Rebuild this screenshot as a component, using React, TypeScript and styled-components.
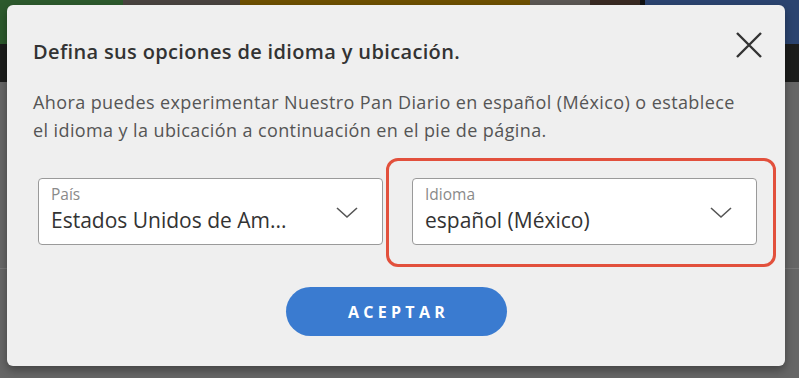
import React from "react";
import styled, { createGlobalStyle } from "styled-components";

const Global = createGlobalStyle`
  html, body { margin: 0; padding: 0; }
  body {
    width: 799px;
    height: 378px;
    overflow: hidden;
    background: #656565;
    font-family: "Open Sans", "Noto Sans", sans-serif;
  }
`;

const Page = styled.div`
  position: relative;
  width: 799px;
  height: 378px;
  overflow: hidden;
  background: #666666;
`;

const Hero = styled.div`
  display: flex;
  height: 44px;
`;

const Tile = styled.div<{ $w: number; $bg: string }>`
  width: ${(p) => p.$w}px;
  flex: ${(p) => (p.$w === 0 ? "1" : "none")};
  background: ${(p) => p.$bg};
`;

const DarkBand = styled.div`
  height: 38px;
  background: #1c1d1c;
`;

const Rule = styled.div`
  margin-top: 186px;
  height: 1px;
  background: #777;
`;

const Modal = styled.div`
  position: absolute;
  left: 7px;
  top: 5px;
  width: 778px;
  height: 361px;
  box-sizing: border-box;
  background: #efefef;
  border-radius: 6px;
  box-shadow: 0 4px 10px rgba(0, 0, 0, 0.35);
  padding: 35px 28px 30px 26px;
  display: flex;
  flex-direction: column;
`;

const Title = styled.h2`
  margin: 0;
  font-size: 20px;
  line-height: 24px;
  font-weight: 600;
  letter-spacing: 0.35px;
  color: #333;
`;

const CloseButton = styled.button`
  position: absolute;
  right: 21px;
  top: 25px;
  width: 30px;
  height: 30px;
  padding: 0;
  border: none;
  background: none;
  display: flex;
  align-items: center;
  justify-content: center;
`;

const Body = styled.p`
  margin: 24px 0 0;
  font-size: 18px;
  line-height: 28px;
  letter-spacing: 0.4px;
  color: #555;
  white-space: nowrap;
`;

const SelectRow = styled.div`
  margin: 34px 0 0 5px;
  display: grid;
  grid-template-columns: 345px 345px;
  column-gap: 29px;
`;

const SelectBox = styled.div`
  position: relative;
  height: 67px;
  box-sizing: border-box;
  background: #fff;
  border: 1px solid #9a9a9a;
  border-radius: 4px;
  padding: 5px 60px 0 12px;
  display: flex;
  flex-direction: column;
`;

const Highlight = styled.div`
  position: absolute;
  left: -27px;
  top: -21px;
  right: -20px;
  bottom: -23px;
  border: 3px solid #e2503c;
  border-radius: 12px;
  pointer-events: none;
`;

const Label = styled.span`
  font-size: 15.5px;
  line-height: 20px;
  color: #8a8a8a;
`;

const Value = styled.span`
  font-size: 21px;
  line-height: 32px;
  color: #333;
  white-space: nowrap;
  overflow: hidden;
  text-overflow: ellipsis;
`;

const Chevron = styled.svg`
  position: absolute;
  right: 24px;
  top: 28px;
`;

const Footer = styled.div`
  margin-top: 42px;
  display: flex;
  justify-content: center;
`;

const Accept = styled.button`
  width: 221px;
  height: 49px;
  margin-left: 3px;
  padding: 0 0 0 4px;
  border: none;
  border-radius: 25px;
  background: #3a7bd0;
  color: #fff;
  font-family: "Open Sans", "Noto Sans", sans-serif;
  font-size: 16px;
  font-weight: 700;
  letter-spacing: 4.3px;
`;

const ChevronIcon = () => (
  <Chevron width="22" height="12" viewBox="0 0 22 12">
    <path d="M1 1 L11 10 L21 1" fill="none" stroke="#555" strokeWidth="1.6" />
  </Chevron>
);

export default function App() {
  return (
    <>
      <Global />
      <Page>
        <Hero>
          <Tile $w={123} $bg="#2d5a2d" />
          <Tile $w={117} $bg="#4a4440" />
          <Tile $w={290} $bg="#6e5000" />
          <Tile $w={60} $bg="#5b5855" />
          <Tile $w={50} $bg="#3a2a22" />
          <Tile $w={5} $bg="#111" />
          <Tile $w={0} $bg="#2b4470" />
        </Hero>
        <DarkBand />
        <Rule />
        <Modal>
          <CloseButton aria-label="Cerrar">
            <svg width="28" height="28" viewBox="0 0 28 28">
              <path d="M2 2 L26 26 M26 2 L2 26" stroke="#333" strokeWidth="2.4" />
            </svg>
          </CloseButton>
          <Title>Defina sus opciones de idioma y ubicación.</Title>
          <Body>
            Ahora puedes experimentar Nuestro Pan Diario en español (México) o establece
            <br />
            el idioma y la ubicación a continuación en el pie de página.
          </Body>
          <SelectRow>
            <SelectBox>
              <Label>País</Label>
              <Value>Estados Unidos de Am...</Value>
              <ChevronIcon />
            </SelectBox>
            <SelectBox>
              <Highlight />
              <Label>Idioma</Label>
              <Value>español (México)</Value>
              <ChevronIcon />
            </SelectBox>
          </SelectRow>
          <Footer>
            <Accept>ACEPTAR</Accept>
          </Footer>
        </Modal>
      </Page>
    </>
  );
}
